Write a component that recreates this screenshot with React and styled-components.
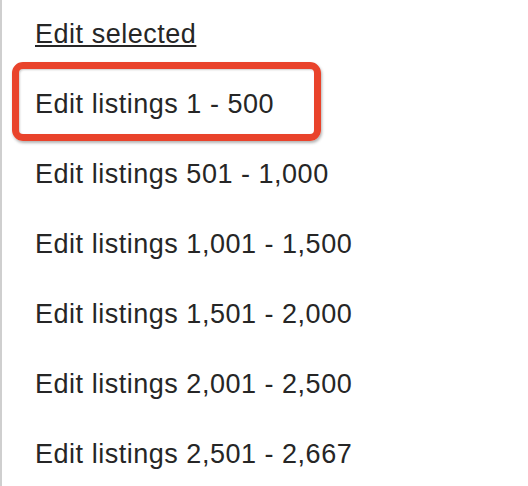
import React from "react";
import styled, { createGlobalStyle } from "styled-components";

const Global = createGlobalStyle`
  html, body { margin: 0; padding: 0; background: #ffffff; }
  body { font-family: "Liberation Sans", Arial, Helvetica, sans-serif; }
`;

const Panel = styled.nav`
  min-height: 486px;
  box-sizing: border-box;
  border-left: 2px solid #cfcfcf;
  padding-left: 33px;
  background: #ffffff;
`;

const List = styled.ul`
  list-style: none;
  margin: 0;
  padding: 0;
`;

const Item = styled.li`
  position: relative;
  height: 70px;
  line-height: 69px;
  font-size: 27px;
  letter-spacing: 0.52px;
  color: #262626;
  white-space: nowrap;

  ${(p) =>
    p.$highlight &&
    `
    &::after {
      content: "";
      position: absolute;
      left: -23px;
      top: -8px;
      width: 309px;
      height: 79px;
      box-sizing: border-box;
      border: 7px solid #e9432b;
      border-radius: 11px;
      box-shadow: 1px 2px 3px rgba(0, 0, 0, 0.3), inset 1px 1px 2px rgba(0, 0, 0, 0.2);
      pointer-events: none;
    }
  `}
`;

const Link = styled.a`
  color: inherit;
  text-decoration: ${(p) => (p.$underline ? "underline" : "none")};
  text-decoration-thickness: 2px;
  text-underline-offset: 2px;
`;

const ranges = [
  "1 - 500",
  "501 - 1,000",
  "1,001 - 1,500",
  "1,501 - 2,000",
  "2,001 - 2,500",
  "2,501 - 2,667",
];

export default function App() {
  return (
    <>
      <Global />
      <Panel>
        <List>
          <Item>
            <Link $underline>Edit selected</Link>
          </Item>
          {ranges.map((r, i) => (
            <Item key={r} $highlight={i === 0}>
              <Link>Edit listings {r}</Link>
            </Item>
          ))}
        </List>
      </Panel>
    </>
  );
}
